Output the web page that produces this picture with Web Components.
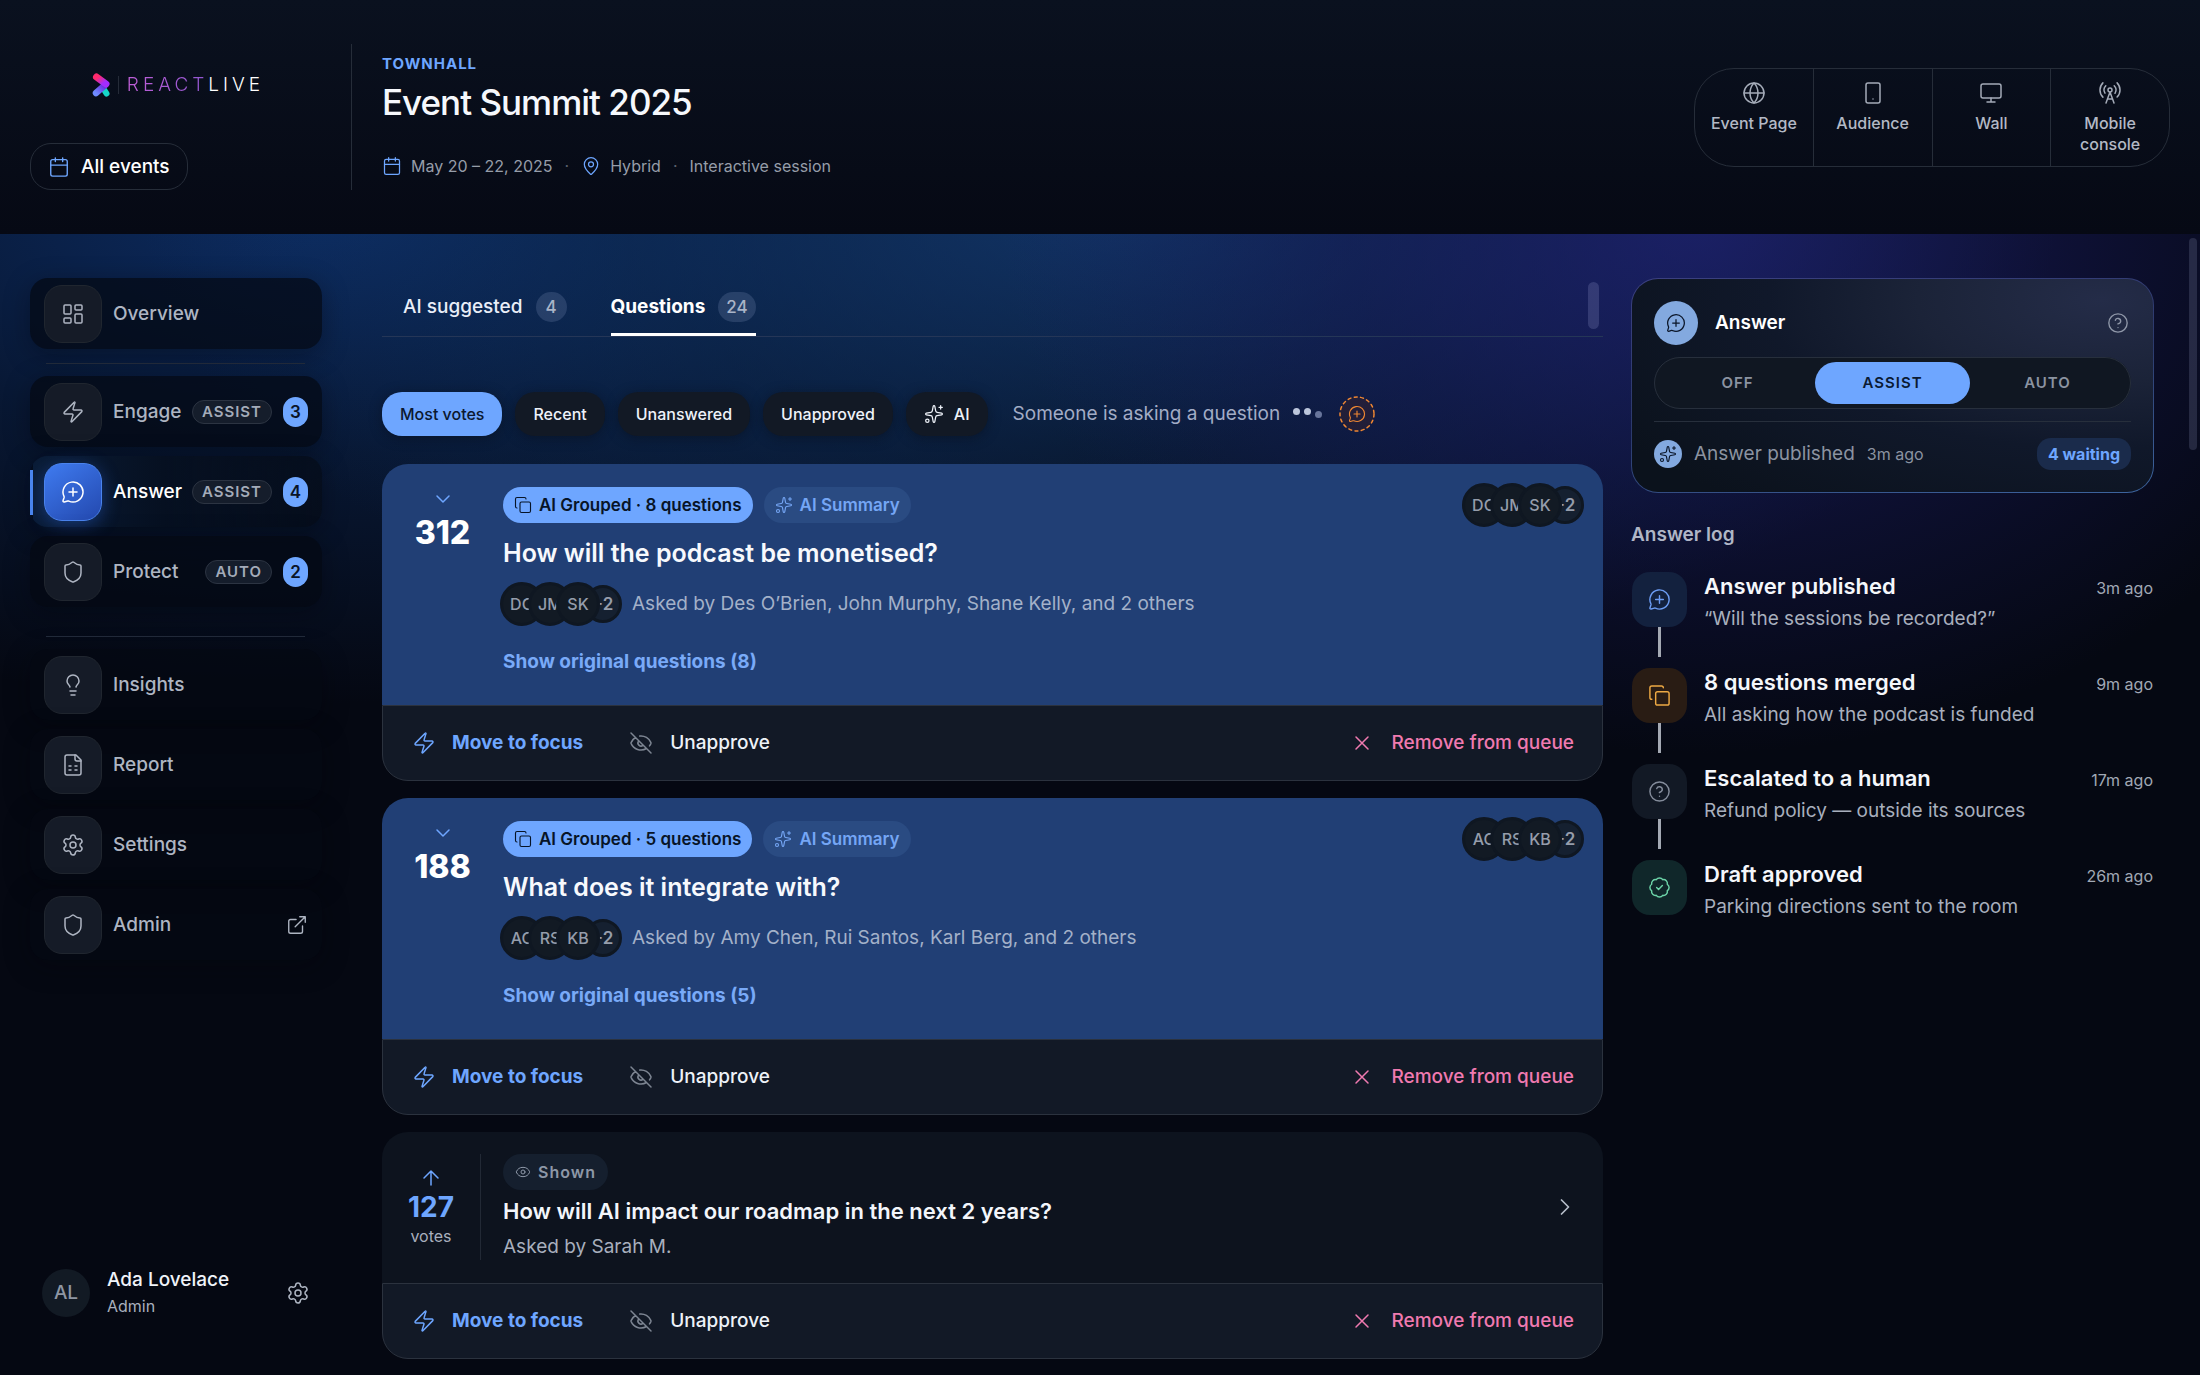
<!DOCTYPE html>
<html lang="en">
<head>
<meta charset="utf-8">
<meta name="viewport" content="width=device-width, initial-scale=1">
<title>ReactLive – Event Summit 2025</title>
<style>
:root{
  --blue:#6ea6ff; --blue-deep:#213f75; --ink:#050812; --text:#f2f5fb; --muted:#a8afbd; --dim:#8b93a1;
  --line:#262d39; --tile:#151b27; --bar:#121926; --pink:#f07ab0;
}
html{background:var(--ink)}
body{margin:0;min-height:100vh;color:var(--text);font:400 19px/26px Inter,"Liberation Sans",sans-serif}
</style>
</head>
<body>
<live-console></live-console>

<script>
const ICONS = {
  calendar:'<path d="M8 2v4M16 2v4M3 10h18"/><rect x="3" y="4" width="18" height="18" rx="2"/>',
  pin:'<path d="M20 10c0 4.993-5.539 10.193-7.399 11.799a1 1 0 0 1-1.202 0C9.539 20.193 4 14.993 4 10a8 8 0 0 1 16 0"/><circle cx="12" cy="10" r="3"/>',
  globe:'<circle cx="12" cy="12" r="10"/><path d="M12 2a14.5 14.5 0 0 0 0 20 14.5 14.5 0 0 0 0-20M2 12h20"/>',
  tablet:'<rect x="5" y="2" width="14" height="20" rx="2"/><path d="M12 18h.01"/>',
  monitor:'<rect x="2" y="3" width="20" height="14" rx="2"/><path d="M8 21h8M12 17v4"/>',
  tower:'<path d="M4.9 16.1C1 12.2 1 5.8 4.9 1.9M7.8 4.7a6.14 6.14 0 0 0-.8 7.5"/><circle cx="12" cy="9" r="2"/><path d="M16.2 4.8c2 2 2.26 5.11.8 7.47M19.1 1.9a9.96 9.96 0 0 1 0 14.1M9.5 18h5M8 22l4-11 4 11"/>',
  dashboard:'<rect x="3" y="3" width="7" height="9" rx="1"/><rect x="14" y="3" width="7" height="5" rx="1"/><rect x="14" y="12" width="7" height="9" rx="1"/><rect x="3" y="16" width="7" height="5" rx="1"/>',
  zap:'<path d="M4 14a1 1 0 0 1-.78-1.63l9.9-10.2a.5.5 0 0 1 .86.46l-1.92 6.02A1 1 0 0 0 13 10h7a1 1 0 0 1 .78 1.63l-9.9 10.2a.5.5 0 0 1-.86-.46l1.92-6.02A1 1 0 0 0 11 14z"/>',
  ask:'<path d="M2.992 16.342a2 2 0 0 1 .094 1.167l-1.065 3.29a1 1 0 0 0 1.236 1.168l3.413-.998a2 2 0 0 1 1.099.092 10 10 0 1 0-4.777-4.719M8 12h8M12 8v8"/>',
  shield:'<path d="M20 13c0 5-3.5 7.5-7.66 8.95a1 1 0 0 1-.67-.01C7.5 20.5 4 18 4 13V6a1 1 0 0 1 1-1c2 0 4.5-1.2 6.24-2.72a1.17 1.17 0 0 1 1.52 0C14.51 3.81 17 5 19 5a1 1 0 0 1 1 1z"/>',
  bulb:'<path d="M15 14c.2-1 .7-1.7 1.5-2.5 1-.9 1.5-2.2 1.5-3.5A6 6 0 0 0 6 8c0 1 .2 2.2 1.5 3.5.7.7 1.3 1.5 1.5 2.5M9 18h6M10 22h4"/>',
  report:'<path d="M15 2H6a2 2 0 0 0-2 2v16a2 2 0 0 0 2 2h12a2 2 0 0 0 2-2V7z"/><path d="M14 2v4a2 2 0 0 0 2 2h4M8 13h2M14 13h2M8 17h2M14 17h2"/>',
  gear:'<path d="M9.671 4.136a2.34 2.34 0 0 1 4.659 0 2.34 2.34 0 0 0 3.319 1.915 2.34 2.34 0 0 1 2.33 4.033 2.34 2.34 0 0 0 0 3.831 2.34 2.34 0 0 1-2.33 4.033 2.34 2.34 0 0 0-3.319 1.915 2.34 2.34 0 0 1-4.659 0 2.34 2.34 0 0 0-3.32-1.915 2.34 2.34 0 0 1-2.33-4.033 2.34 2.34 0 0 0 0-3.831A2.34 2.34 0 0 1 6.35 6.051a2.34 2.34 0 0 0 3.319-1.915"/><circle cx="12" cy="12" r="3"/>',
  external:'<path d="M15 3h6v6M10 14 21 3M18 13v6a2 2 0 0 1-2 2H5a2 2 0 0 1-2-2V8a2 2 0 0 1 2-2h6"/>',
  sparkles:'<path d="M11.017 2.814a1 1 0 0 1 1.966 0l1.051 5.558a2 2 0 0 0 1.594 1.594l5.558 1.051a1 1 0 0 1 0 1.966l-5.558 1.051a2 2 0 0 0-1.594 1.594l-1.051 5.558a1 1 0 0 1-1.966 0l-1.051-5.558a2 2 0 0 0-1.594-1.594l-5.558-1.051a1 1 0 0 1 0-1.966l5.558-1.051a2 2 0 0 0 1.594-1.594zM20 2v4M22 4h-4"/><circle cx="4" cy="20" r="2"/>',
  copy:'<rect x="8" y="8" width="14" height="14" rx="2"/><path d="M4 16c-1.1 0-2-.9-2-2V4c0-1.1.9-2 2-2h10c1.1 0 2 .9 2 2"/>',
  eye:'<path d="M2.062 12.348a1 1 0 0 1 0-.696 10.75 10.75 0 0 1 19.876 0 1 1 0 0 1 0 .696 10.75 10.75 0 0 1-19.876 0"/><circle cx="12" cy="12" r="3"/>',
  eyeOff:'<path d="M10.733 5.076a10.744 10.744 0 0 1 11.205 6.575 1 1 0 0 1 0 .696 10.747 10.747 0 0 1-1.444 2.49M14.084 14.158a3 3 0 0 1-4.242-4.242M17.479 17.499a10.75 10.75 0 0 1-15.417-5.151 1 1 0 0 1 0-.696 10.75 10.75 0 0 1 4.446-5.143M2 2l20 20"/>',
  close:'<path d="M18 6 6 18M6 6l12 12"/>',
  up:'<path d="m5 12 7-7 7 7M12 19V5"/>',
  down:'<path d="m6 9 6 6 6-6"/>',
  right:'<path d="m9 18 6-6-6-6"/>',
  badge:'<path d="M3.85 8.62a4 4 0 0 1 4.78-4.77 4 4 0 0 1 6.74 0 4 4 0 0 1 4.78 4.78 4 4 0 0 1 0 6.74 4 4 0 0 1-4.77 4.78 4 4 0 0 1-6.75 0 4 4 0 0 1-4.78-4.77 4 4 0 0 1 0-6.76M9 12l2 2 4-4"/>',
  help:'<circle cx="12" cy="12" r="10"/><path d="M9.09 9a3 3 0 0 1 5.83 1c0 2-3 3-3 3M12 17h.01"/>'
};

const RESET = `
  *{box-sizing:border-box}
  :host{display:block;box-sizing:border-box}
  button{font:inherit;color:inherit;background:none;border:0;padding:0;margin:0;cursor:pointer}
  a{color:inherit;text-decoration:none}
  h1,h2,h3,p,ul,ol{margin:0;padding:0;font:inherit;list-style:none}
`;

/* Base class: renders the subclass view() with its css() in an open shadow root. */
class View extends HTMLElement{
  connectedCallback(){
    if(this.shadowRoot) return;
    const t = document.createElement('template');
    t.innerHTML = `<style>${RESET}${this.css()}</style>${this.view()}`;
    this.attachShadow({mode:'open'}).append(t.content.cloneNode(true));
  }
  css(){return ''}
  view(){return '<slot></slot>'}
  at(name){return this.getAttribute(name) || ''}
}

customElements.define('app-icon', class extends View{
  css(){return `:host{display:inline-flex;flex:none;width:var(--size,24px);height:var(--size,24px)}
    svg{width:100%;height:100%;fill:none;stroke:currentColor;stroke-width:var(--stroke,1.5);stroke-linecap:round;stroke-linejoin:round}`}
  view(){return `<svg viewBox="0 0 24 24" aria-hidden="true">${ICONS[this.at('name')]}</svg>`}
});

customElements.define('brand-logo', class extends View{
  css(){return `
    :host{display:flex;align-items:center;gap:8px}
    svg{width:18px;height:24px;flex:none}
    i{width:1px;height:18px;background:#252b38}
    p{font:300 19px/24px Inter,sans-serif;letter-spacing:4px;margin-right:-4px;color:#fff}
    span{background:linear-gradient(90deg,#c05fd8,#8f56cf);-webkit-background-clip:text;background-clip:text;color:transparent}`}
  view(){return `
    <svg viewBox="0 0 18 24" fill="none" stroke-linecap="round" aria-hidden="true">
      <defs>
        <linearGradient id="p" x1="0" y1="0" x2="1" y2="1"><stop offset=".1" stop-color="#ff2a6d"/><stop offset=".8" stop-color="#a22cff"/></linearGradient>
        <linearGradient id="v" x1="1" y1="0" x2="0" y2="1"><stop offset="0" stop-color="#6a2be2"/><stop offset="1" stop-color="#6f8bff"/></linearGradient>
      </defs>
      <path d="M11 15 14.500 20.500" stroke="#16d6c8" stroke-width="6"/>
      <path d="M12 13 4 20" stroke="url(#v)" stroke-width="6.500"/>
      <path d="M4.500 4 14 11" stroke="url(#p)" stroke-width="7"/>
    </svg><i></i><p><span>REACT</span>LIVE</p>`}
});

customElements.define('tool-link', class extends View{
  css(){return `
    :host{flex:1 1 0;border-left:1px solid var(--line)}
    :host(:first-child){border-left:0}
    a{display:flex;flex-direction:column;align-items:center;gap:8px;padding:12px 14px 11px;text-align:center;font:500 16px/21px Inter,sans-serif;color:#b3b9c5;height:100%}
    app-icon{color:#a4abb8}`}
  view(){return `<a href="#"><app-icon name="${this.at('icon')}"></app-icon><slot></slot></a>`}
});

customElements.define('app-header', class extends View{
  css(){return `
    :host{display:flex;padding:44px 30px 44px;background:linear-gradient(#0a111f,#060914)}
    .brand{width:322px;height:146px;padding:29px 29px 0 0;border-right:1px solid var(--line);display:flex;flex-direction:column;justify-content:space-between}
    brand-logo{align-self:center}
    .all{align-self:flex-start;display:flex;align-items:center;gap:11px;height:47px;padding:0 17px;border:1px solid var(--line);border-radius:21px;font-weight:500;color:#fff}
    .all app-icon{--size:22px;color:var(--blue)}
    .event{flex:1;padding:10px 0 0 30px}
    .kind{font:700 15px/20px Inter,sans-serif;letter-spacing:1px;color:var(--blue)}
    h1{font:500 35px/44px Inter,sans-serif;letter-spacing:-1px;margin-top:6px;color:#f6f8fc}
    .meta{display:flex;align-items:center;gap:9px;margin-top:30px;font:400 16px/24px Inter,sans-serif;color:#969da9}
    .meta app-icon{--size:20px;color:var(--blue)}
    .meta b{font-weight:400;color:#5b6270;padding:0 3px}
    nav{align-self:center;display:flex;width:476px;border:1px solid var(--line);border-radius:40px;overflow:hidden}`}
  view(){return `
    <div class="brand"><brand-logo></brand-logo>
      <a class="all" href="#"><app-icon name="calendar"></app-icon>All events</a></div>
    <div class="event"><p class="kind">TOWNHALL</p><h1>Event Summit 2025</h1>
      <div class="meta"><app-icon name="calendar"></app-icon><span>May 20 – 22, 2025</span><b>·</b><app-icon name="pin"></app-icon><span>Hybrid</span><b>·</b><span>Interactive session</span></div></div>
    <nav aria-label="Event screens">
      <tool-link icon="globe">Event Page</tool-link><tool-link icon="tablet">Audience</tool-link>
      <tool-link icon="monitor">Wall</tool-link><tool-link icon="tower">Mobile console</tool-link>
    </nav>`}
});

customElements.define('nav-item', class extends View{
  css(){return `
    a{display:flex;align-items:center;height:71px;padding:0 14px;border-radius:18px;gap:11px;background:rgba(4,9,18,.72);box-shadow:0 6px 26px rgba(2,5,12,.35);color:#aeb5c2;font:500 19px/26px Inter,sans-serif}
    .tile{width:58px;height:58px;flex:none;display:grid;place-items:center;border-radius:18px;background:var(--tile);border:1px solid #20262f}
    .tile app-icon{--size:24px}
    .label{flex:1}
    .mode{height:24px;padding:0 9px;border:1px solid #2c3442;border-radius:12px;background:#151d2b;font:600 15px/22px Inter,sans-serif;letter-spacing:1px;color:#a3abb9;margin-left:-11px}
    .count{width:25px;height:30px;border-radius:13px;background:var(--blue);color:#0a1426;font:600 17px/30px Inter,sans-serif;text-align:center}
    .ext{--size:22px}
    :host([current]) a{color:#fff;background:linear-gradient(90deg,#0a1c36,#061021 45%,rgba(4,9,18,.6))}
    :host([current]) a{border-left:3px solid #4b86ee;border-image:linear-gradient(transparent 20%,#4b86ee 20%,#4b86ee 82%,transparent 82%) 1;padding-left:11px}
    :host([current]) .tile{background:linear-gradient(145deg,#3f7bf0,#2348ae);border-color:#4a83ee;box-shadow:0 4px 18px rgba(45,105,230,.4)}`}
  view(){
    const mode = this.at('mode'), count = this.at('count');
    return `<a href="#"${this.hasAttribute('current')?' aria-current="page"':''}>
      <span class="tile"><app-icon name="${this.at('icon')}"></app-icon></span>
      <span class="label"><slot></slot></span>
      ${mode?`<span class="mode">${mode}</span>`:''}${count?`<span class="count">${count}</span>`:''}
      ${this.hasAttribute('external')?'<app-icon class="ext" name="external"></app-icon>':''}</a>`}
});

customElements.define('user-card', class extends View{
  css(){return `
    :host{display:flex;align-items:center;gap:17px;padding:0 12px}
    .face{width:48px;height:48px;border-radius:50%;background:#121a24;display:grid;place-items:center;font:500 19px/26px Inter,sans-serif;color:#8e96a3}
    .who{flex:1;padding-bottom:2px}
    .name{font-weight:500;line-height:28px;color:#f0f3f9}
    .role{font-size:16px;line-height:24px;color:var(--muted)}
    button{color:#aeb5c2;display:flex}`}
  view(){return `<span class="face">AL</span><div class="who"><p class="name">Ada Lovelace</p><p class="role">Admin</p></div>
    <button aria-label="Account settings"><app-icon name="gear"></app-icon></button>`}
});

customElements.define('side-nav', class extends View{
  css(){return `
    :host{display:flex;flex-direction:column;padding-bottom:55px}
    nav{display:flex;flex-direction:column;gap:9px}
    hr{border:0;height:1px;width:259px;background:#222b3b;margin:5px 0 3px 16px}
    hr.wide{margin-top:20px}
    user-card{margin-top:auto}`}
  view(){return `<nav aria-label="Console">
    <nav-item icon="dashboard">Overview</nav-item><hr>
    <nav-item icon="zap" mode="ASSIST" count="3">Engage</nav-item>
    <nav-item icon="ask" mode="ASSIST" count="4" current>Answer</nav-item>
    <nav-item icon="shield" mode="AUTO" count="2">Protect</nav-item><hr class="wide">
    <nav-item icon="bulb">Insights</nav-item><nav-item icon="report">Report</nav-item>
    <nav-item icon="gear">Settings</nav-item><nav-item icon="shield" external>Admin</nav-item></nav>
    <user-card></user-card>`}
});

customElements.define('view-tabs', class extends View{
  css(){return `
    :host{display:flex;align-items:flex-start;justify-content:space-between;padding:4px 4px 0 21px;height:59px;border-bottom:1px solid #253657}
    div{display:flex;gap:44px;height:55px}
    button{display:flex;align-items:flex-start;gap:13px;height:54px;padding-top:10px;font-weight:500;color:#e9eef8;line-height:30px}
    button span{min-width:31px;height:30px;padding:0 8px;border-radius:15px;background:rgba(120,140,180,.25);font:500 17px/30px Inter,sans-serif;color:#a9b4c8;text-align:center}
    button[aria-selected=true]{font-weight:700;color:#fff;border-bottom:3px solid #fff}
    i{width:11px;height:47px;border-radius:6px;background:rgba(120,125,180,.3)}`}
  view(){return `<div role="tablist"><button role="tab" aria-selected="false">AI suggested <span>4</span></button>
    <button role="tab" aria-selected="true">Questions <span>24</span></button></div><i></i>`}
});

customElements.define('sort-bar', class extends View{
  css(){return `
    :host{display:flex;align-items:center;gap:13px}
    button{display:flex;align-items:center;gap:10px;height:44px;padding:0 18px;border-radius:20px;background:#121925;box-shadow:0 2px 12px rgba(8,14,26,.5);font:500 16px/24px Inter,sans-serif;color:#eef2f9}
    button[aria-pressed=true]{background:var(--blue);color:#0b1830}
    app-icon{--size:20px}
    .typing{display:flex;align-items:center;gap:13px;color:#a2acc6;padding-left:12px}
    .dots{display:flex;gap:4px;height:12px}
    .dots i{width:7px;height:7px;border-radius:50%;background:#bcc6dc}
    .dots i:last-child{background:#68759b;align-self:center}
    .ring{width:36px;height:36px;flex:none;margin-left:4px;fill:none;stroke:#ef8733;stroke-width:1.500;stroke-linecap:round;stroke-linejoin:round}
    .ring .edge{fill:rgba(90,40,20,.25);stroke-dasharray:3 3.400;stroke-width:1.500}`}
  view(){return `<button aria-pressed="true">Most votes</button><button>Recent</button><button>Unanswered</button><button>Unapproved</button>
    <button><app-icon name="sparkles"></app-icon>AI</button>
    <div class="typing"><span>Someone is asking a question</span><span class="dots"><i></i><i></i><i></i></span>
      <svg class="ring" viewBox="0 0 36 36" aria-hidden="true"><circle class="edge" cx="18" cy="18" r="17"/><svg x="9" y="9" width="18" height="18" viewBox="0 0 24 24">${ICONS.ask}</svg></svg></div>`}
});

customElements.define('avatar-stack', class extends View{
  css(){return `
    :host{display:flex;align-items:center;height:44px}
    span{width:44px;height:44px;margin-right:-16px;flex:none;border-radius:50%;border:3px solid #0f1722;background:#121a24;display:grid;place-items:center;font:500 16px/20px Inter,sans-serif;color:#959dab;z-index:1}
    span.more{width:38px;height:38px;margin:0;font-weight:600;font-size:17px;background:#152030;z-index:0;padding-right:1px}`}
  view(){return this.at('people').split(' ').map(p=>`<span>${p}</span>`).join('')+`<span class="more">+2</span>`}
});

customElements.define('tag-pill', class extends View{
  css(){return `
    :host{display:inline-flex;align-items:center;gap:7px;height:36px;padding:0 11px;border-radius:18px;font:600 17px/24px Inter,sans-serif}
    app-icon{--size:18px}
    :host([kind=solid]){background:var(--blue);color:#071427}
    :host([kind=soft]){background:#2a4b82;color:#75a6f5}
    :host([kind=quiet]){background:#151f2e;color:#8e98a8;padding:0 12px;letter-spacing:1px;font:600 16px/24px Inter,sans-serif}
    :host([kind=quiet]) app-icon{--size:16px}`}
  view(){return `<app-icon name="${this.at('icon')}"></app-icon><slot></slot>`}
});

customElements.define('card-actions', class extends View{
  css(){return `
    :host{display:flex;align-items:center;gap:46px;height:76px;padding:0 28px 0 29px;border:1px solid #2b323e;border-radius:0 0 26px 26px;background:var(--bar)}
    button{display:flex;align-items:center;gap:17px;font-weight:500;color:#eef2f8}
    .focus{font-weight:700;gap:16px;color:var(--blue)}
    .hide app-icon{color:#7d8592}
    .drop{margin-left:auto;color:var(--pink)}`}
  view(){return `<button class="focus"><app-icon name="zap"></app-icon>Move to focus</button>
    <button class="hide"><app-icon name="eyeOff"></app-icon>Unapprove</button>
    <button class="drop"><app-icon name="close"></app-icon>Remove from queue</button>`}
});

/* Grouped question: votes, tags, slotted question text, people and the link to its originals. */
customElements.define('group-card', class extends View{
  css(){return `
    .body{display:flex;padding:23px 19px 30px 0;background:var(--blue-deep);border-radius:26px 26px 0 0}
    .votes{width:121px;display:flex;flex-direction:column;align-items:center;color:#fff;font:800 32px/40px Inter,sans-serif}
    .votes app-icon{color:var(--blue);margin-bottom:2px}
    .main{flex:1;display:flex;flex-direction:column;align-items:flex-start}
    .tags{display:flex;gap:11px}
    h2{font:600 25px/32px Inter,sans-serif;margin:14px 0 13px;color:#f7f9fd}
    .by{display:flex;align-items:center;gap:10px;margin-left:-3px;color:#a3b1c9}
    a{font-weight:700;color:#79aaf8;margin-top:23px}
    avatar-stack.top{margin-top:-4px}`}
  view(){const n=this.at('count');return `<article><div class="body">
    <div class="votes"><app-icon name="down"></app-icon>${this.at('votes')}</div>
    <div class="main"><div class="tags"><tag-pill kind="solid" icon="copy">AI Grouped · ${n} questions</tag-pill><tag-pill kind="soft" icon="sparkles">AI Summary</tag-pill></div>
      <h2><slot></slot></h2>
      <div class="by"><avatar-stack people="${this.at('people')}"></avatar-stack><span>Asked by ${this.at('names')}, and 2 others</span></div>
      <a href="#">Show original questions (${n})</a></div>
    <avatar-stack class="top" people="${this.at('people')}"></avatar-stack></div>
    <card-actions></card-actions></article>`}
});

customElements.define('single-card', class extends View{
  css(){return `
    .body{display:flex;align-items:center;padding:22px 24px 23px 0;background:#0d131e;border-radius:26px 26px 0 0}
    .votes{width:99px;height:106px;display:flex;flex-direction:column;align-items:center;justify-content:center;border-right:1px solid #222935;color:var(--blue);font:700 28px/34px Inter,sans-serif}
    .votes span{font:400 16px/24px Inter,sans-serif;color:var(--muted)}
    .main{flex:1;padding-left:22px}
    h2{font:600 22px/30px Inter,sans-serif;margin:6px 0 8px;color:#f3f6fb}
    p{color:var(--muted)}
    tag-pill{display:inline-flex;vertical-align:top}
    .open{color:#b6bdc9;display:flex}`}
  view(){return `<article><div class="body">
    <div class="votes"><app-icon name="up"></app-icon>${this.at('votes')}<span>votes</span></div>
    <div class="main"><tag-pill kind="quiet" icon="eye">Shown</tag-pill><h2><slot></slot></h2><p>Asked by ${this.at('names')}</p></div>
    <button class="open" aria-label="Open question"><app-icon name="right" style="--size:28px"></app-icon></button></div>
    <card-actions></card-actions></article>`}
});

customElements.define('answer-panel', class extends View{
  css(){return `
    :host{padding:22px;border:1px solid transparent;border-radius:27px;
      background:radial-gradient(110% 120% at 90% 10%,#242c48 0%,#1b2338 32%,#10182a 58%,#0b121c 100%) padding-box,linear-gradient(170deg,#3b4080,#2c3a6c 50%,#3d659f) border-box}
    .top,.last{display:flex;align-items:center}
    .dot{width:44px;height:44px;border-radius:50%;background:#83a9df;color:#0a1528;display:grid;place-items:center;margin-right:17px}
    .dot app-icon{--size:20px}
    h2{flex:1;font-weight:600;color:#fff}
    .help{color:#8f97a8;display:flex;padding-right:2px}
    fieldset{display:flex;margin:12px 0;padding:4px 5px;border:1px solid #272f3c;border-radius:26px;background:#101722}
    label{flex:1;display:grid;place-items:center;height:42px;border-radius:21px;font:600 15px/20px Inter,sans-serif;letter-spacing:1px;color:#8b93a1;cursor:pointer}
    input{appearance:none;width:0;height:0;margin:0;grid-area:1/1}
    label span{grid-area:1/1}
    label:has(:checked){background:var(--blue);color:#0b1a33}
    .last{border-top:1px solid #272f3c;padding-top:16px;color:#8b93a1;gap:12px;font-size:19px}
    .mini{width:28px;height:28px;border-radius:50%;background:#83a9df;color:#0a1528;display:grid;place-items:center}
    .mini app-icon{--size:18px}
    time{font-size:16px;flex:1}
    .wait{height:32px;padding:0 11px;border-radius:14px;background:#1a2b4b;color:var(--blue);font:700 16px/32px Inter,sans-serif}`}
  view(){return `<div class="top"><span class="dot"><app-icon name="ask"></app-icon></span><h2>Answer</h2><button class="help" aria-label="Help"><app-icon name="help" style="--size:22px"></app-icon></button></div>
    <fieldset aria-label="Answer mode">
      <label><input type="radio" name="mode"><span>OFF</span></label>
      <label><input type="radio" name="mode" checked><span>ASSIST</span></label>
      <label><input type="radio" name="mode"><span>AUTO</span></label></fieldset>
    <div class="last"><span class="mini"><app-icon name="sparkles"></app-icon></span><span>Answer published</span><time>3m ago</time><span class="wait">4 waiting</span></div>`}
});

customElements.define('log-entry', class extends View{
  css(){return `
    :host{display:flex;gap:17px;min-height:96px;padding:0 1px}
    .rail{width:55px;display:flex;flex-direction:column;align-items:center}
    .rail span{width:55px;height:55px;border-radius:18px;display:grid;place-items:center;background:#121925;color:#848c9b}
    .rail::after{content:"";width:3px;height:30px;background:#a4a9b3}
    :host(:last-of-type) .rail::after{display:none}
    :host([tone=blue]) .rail span{background:#13213e;color:#6c9cf3}
    :host([tone=amber]) .rail span{background:#291c14;color:#eda944}
    :host([tone=green]) .rail span{background:#10272a;color:#6cd3a8}
    .rail app-icon{--size:23px}
    .text{flex:1}
    .row{display:flex;justify-content:space-between;align-items:baseline}
    h3{font:600 22px/28px Inter,sans-serif;color:#f5f7fb}
    time{font-size:16px;line-height:24px;color:#a1a8b5}
    p{margin-top:6px;color:var(--muted)}`}
  view(){return `<div class="rail"><span><app-icon name="${this.at('icon')}"></app-icon></span></div>
    <div class="text"><div class="row"><h3>${this.at('heading')}</h3><time>${this.at('when')}</time></div><p><slot></slot></p></div>`}
});

customElements.define('live-console', class extends View{
  css(){return `
    :host{display:flex;flex-direction:column;min-height:100vh}
    main{flex:1;display:grid;grid-template-columns:292px minmax(0,1fr) 523px;padding:44px 46px 0 30px;position:relative;
      background:
        radial-gradient(700px 540px at 1700px -20px,rgba(34,36,124,.72),rgba(28,30,108,.4) 50%,rgba(28,28,100,0)),
        radial-gradient(960px 480px at 1100px -30px,rgba(22,66,128,.7),rgba(16,54,104,.4) 50%,rgba(14,48,92,0)),
        radial-gradient(1040px 500px at 320px -30px,rgba(14,52,116,.82),rgba(12,46,100,.4) 50%,rgba(12,44,96,0)),
        #050812}
    .feed{margin:0 28px 0 60px;padding-bottom:14px}
    sort-bar{margin:55px 0 28px}
    .cards{display:flex;flex-direction:column;gap:17px}
    h2.log{font-weight:600;color:#b0b6c6;margin:29px 0 24px}
    .scroll{position:absolute;right:3px;top:4px;width:8px;height:212px;border-radius:4px;background:rgba(110,120,150,.28)}`}
  view(){return `<app-header></app-header>
  <main><side-nav></side-nav>
    <section class="feed" aria-label="Questions"><view-tabs></view-tabs><sort-bar></sort-bar>
      <div class="cards">
        <group-card votes="312" count="8" people="DO JM SK" names="Des O’Brien, John Murphy, Shane Kelly">How will the podcast be monetised?</group-card>
        <group-card votes="188" count="5" people="AC RS KB" names="Amy Chen, Rui Santos, Karl Berg">What does it integrate with?</group-card>
        <single-card votes="127" names="Sarah M.">How will AI impact our roadmap in the next 2 years?</single-card>
      </div></section>
    <aside><answer-panel></answer-panel><h2 class="log">Answer log</h2>
      <log-entry tone="blue" icon="ask" heading="Answer published" when="3m ago">“Will the sessions be recorded?”</log-entry>
      <log-entry tone="amber" icon="copy" heading="8 questions merged" when="9m ago">All asking how the podcast is funded</log-entry>
      <log-entry icon="help" heading="Escalated to a human" when="17m ago">Refund policy — outside its sources</log-entry>
      <log-entry tone="green" icon="badge" heading="Draft approved" when="26m ago">Parking directions sent to the room</log-entry></aside>
    <i class="scroll"></i></main>`}
});
</script>
</body>
</html>
